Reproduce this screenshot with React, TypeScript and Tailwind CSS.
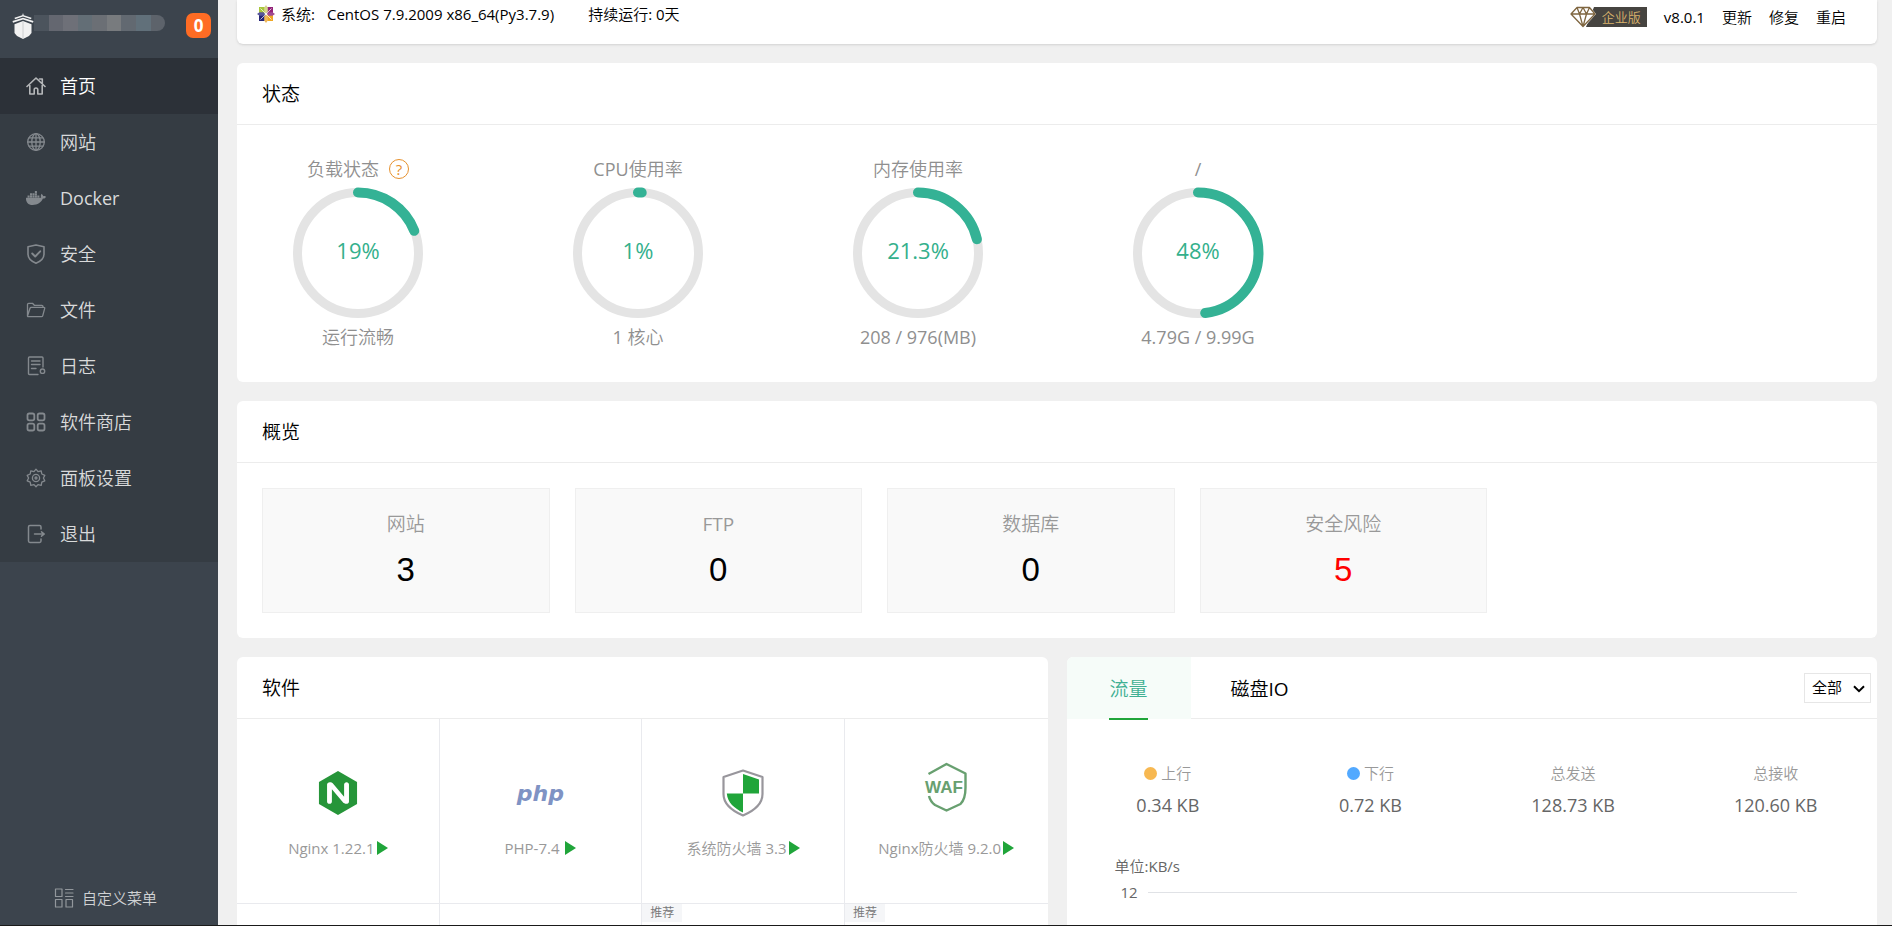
import React from 'react';
import { FaDocker } from 'react-icons/fa';
import { SiNginx } from 'react-icons/si';

const stroke = { fill: 'none', stroke: 'currentColor', strokeWidth: 1.6, strokeLinejoin: 'round', strokeLinecap: 'round' } as const;

const HomeIcon = () => (
  <svg viewBox="0 0 20 20" className="size-5" {...stroke}>
    <path d="M1 10.5 10 2l9 8.5M13.5 3h2.8v4.5M3.8 9.5V18h4.4v-4.2a1.8 1.8 0 0 1 3.6 0V18h4.4V9.5" />
  </svg>
);

const GlobeIcon = () => (
  <svg viewBox="0 0 20 20" className="size-5" {...stroke} strokeWidth={1.3}>
    <circle cx="10" cy="10" r="8.3" />
    <ellipse cx="10" cy="10" rx="4.2" ry="8.3" />
    <path d="M10 1.7v16.6M1.7 10h16.6M3 5.8h14M3 14.2h14" />
  </svg>
);

const ShieldIcon = () => (
  <svg viewBox="0 0 20 20" className="size-5" {...stroke}>
    <path d="M10 1 18 2.8V10c0 4.4-3.4 7.4-8 9.2C5.4 17.4 2 14.4 2 10V2.8z" />
    <path d="m6.2 9.5 3 3 5-5.2" strokeWidth={1.9} />
  </svg>
);

const FolderIcon = () => (
  <svg viewBox="0 0 20 20" className="size-5" {...stroke} strokeWidth={1.3}>
    <path d="M1.5 16V4.5c0-.8.4-1.2 1.2-1.2h3.8l1.8 2h7.5c.8 0 1.2.4 1.2 1.2v.8M1.5 16 4 8.2c.2-.6.5-.9 1.2-.9h12.6c.8 0 1.1.4.9 1.1l-2 7.4c-.2.7-.5.9-1.2.9H2.3c-.6 0-.8-.3-.8-.7z" />
  </svg>
);

const LogIcon = () => (
  <svg viewBox="0 0 20 20" className="size-5" {...stroke} strokeWidth={1.4}>
    <path d="M12 18.5H3.5c-.6 0-1-.4-1-1V2c0-.6.4-1 1-1H16c.6 0 1 .4 1 1v9M5.5 5H14M5.5 8.5H14M5.5 12.5H10" />
    <circle cx="16.5" cy="15.2" r="2.2" />
  </svg>
);

const StoreIcon = () => (
  <svg viewBox="0 0 20 20" className="size-5" {...stroke} strokeWidth={1.8}>
    <rect x="1.5" y="1.5" width="6.8" height="6.8" rx="1.8" />
    <rect x="11.7" y="1.5" width="6.8" height="6.8" rx="1.8" />
    <rect x="1.5" y="11.7" width="6.8" height="6.8" rx="1.8" />
    <rect x="11.7" y="11.7" width="6.8" height="6.8" rx="1.8" />
  </svg>
);

const GearIcon = () => (
  <svg viewBox="0 0 20 20" className="size-5" {...stroke} strokeWidth={1.3}>
    <path d="M10 1.2 12 3.6l3.2-.8.6 3.2 3 1.4L17.4 10l1.4 2.8-3 1.3-.6 3.2-3.2-.7L10 18.8l-2-2.2-3.2.7-.6-3.2-3-1.3L2.6 10 1.2 7.4l3-1.4.6-3.2 3.2.8z" />
    <circle cx="10" cy="10" r="3.6" />
    <circle cx="10" cy="10" r="1" />
  </svg>
);

const ExitIcon = () => (
  <svg viewBox="0 0 20 20" className="size-5" {...stroke} strokeWidth={1.5}>
    <path d="M15 5V3c0-.9-.5-1.4-1.4-1.4H3.9c-.9 0-1.4.5-1.4 1.4v14c0 .9.5 1.4 1.4 1.4h9.7c.9 0 1.4-.5 1.4-1.4v-2M8.5 10h9M15.5 7.8l2.8 2.2-2.8 2.2" />
  </svg>
);

const menu = [
  { label: '首页', icon: <HomeIcon />, active: true },
  { label: '网站', icon: <GlobeIcon /> },
  { label: 'Docker', icon: <FaDocker className="size-5" /> },
  { label: '安全', icon: <ShieldIcon /> },
  { label: '文件', icon: <FolderIcon /> },
  { label: '日志', icon: <LogIcon /> },
  { label: '软件商店', icon: <StoreIcon /> },
  { label: '面板设置', icon: <GearIcon /> },
  { label: '退出', icon: <ExitIcon /> },
];

const gauges = [
  { title: '负载状态', value: 19, foot: '运行流畅', help: true },
  { title: 'CPU使用率', value: 1, foot: '1 核心' },
  { title: '内存使用率', value: 21.3, foot: '208 / 976(MB)' },
  { title: '/', value: 48, foot: '4.79G / 9.99G' },
];

const overview = [
  { label: '网站', count: 3 },
  { label: 'FTP', count: 0 },
  { label: '数据库', count: 0 },
  { label: '安全风险', count: 5, danger: true },
];

const traffic = [
  { label: '上行', value: '0.34 KB', dot: 'bg-[#f7b851]' },
  { label: '下行', value: '0.72 KB', dot: 'bg-[#52a9ff]' },
  { label: '总发送', value: '128.73 KB' },
  { label: '总接收', value: '120.60 KB' },
];

const FirewallLogo = () => (
  <svg viewBox="0 0 42 48" className="h-12 w-[42px]">
    <path d="M21 1.5 40.5 8v17c0 10-9 17-19.5 21.5C10.5 42 1.5 35 1.5 25V8z" fill="#fff" stroke="#98969c" strokeWidth="2.2" strokeLinejoin="round" />
    <path d="M21 5 37 10.5V24.5H21zM21 24.5V43.5C12.5 39.5 5.5 33.5 4.8 24.5z" fill="#20a53a" />
  </svg>
);

const WafLogo = () => (
  <svg viewBox="0 0 44 50" className="h-[50px] w-11">
    <path d="M4.5 12 22.5 2 41.5 11.5v14c0 8-1.5 13-5 16.5L22.5 48.5 11 43c-3.5-2.5-5-5-6-9" fill="none" stroke="#68a070" strokeWidth="2.4" strokeLinejoin="round" />
    <text x="20" y="31" textAnchor="middle" fontFamily="Liberation Sans, sans-serif" fontWeight="700" fontSize="17" fill="#68a070">WAF</text>
  </svg>
);

const software = [
  { name: 'Nginx 1.22.1', logo: <SiNginx className="size-11 text-[#269539]" /> },
  { name: 'PHP-7.4 ', logo: <span className="pt-0.5 font-['DejaVu_Sans'] text-[22px] leading-7 font-bold text-[#7f93c4] italic">php</span> },
  { name: '系统防火墙 3.3', logo: <FirewallLogo /> },
  { name: 'Nginx防火墙 9.2.0', logo: <WafLogo />, raised: true },
];

const PanelLogo = () => (
  <svg viewBox="0 0 22 26" className="h-[26px] w-[22px]" fill="#f2f2f2">
    <path d="M11 0 11.7 2.2 19.5 4.8 19 6.2 11 3.5 3 6.2 2.5 4.8 10.3 2.2z" />
    <path d="M11 4.7 21.5 8 21 9.8 11 6.4 1 9.8.5 8z" />
    <path d="M11 8 19.5 11.2V20L17 23 11 26 5 23 2.5 20V11.2z" />
    <path d="M11 8V26" stroke="#c4c6c8" strokeWidth=".8" />
  </svg>
);

const CentosLogo = () => (
  <svg viewBox="0 0 18 18" className="size-[18px]">
    <path d="M2 2h6.5v6.5H2z" fill="#a8c63b" />
    <path d="M9.5 2H16v6.5H9.5z" fill="#932279" />
    <path d="M2 9.5h6.5V16H2z" fill="#262577" />
    <path d="M9.5 9.5H16V16H9.5z" fill="#efa724" />
    <path d="m9 0 1.8 2.5v4L9 8 7.2 6.5v-4z" fill="#d6d58b" />
    <path d="m18 9-2.5 1.8h-4L10 9l1.5-1.8h4z" fill="#a04a92" />
    <path d="m9 18-1.8-2.5v-4L9 10l1.8 1.5v4z" fill="#efb85a" />
    <path d="m0 9 2.5-1.8h4L8 9l-1.5 1.8h-4z" fill="#57559a" />
    <path d="m3.5 3.5 11 11M14.5 3.5l-11 11" stroke="#fff" strokeWidth=".7" />
  </svg>
);

const EditionBadge = () => (
  <div className="flex items-center">
    <svg viewBox="0 0 28 22" className="h-[22px] w-7">
      <path d="M24 1h4v20H16z" fill="#464440" />
      <path d="M6.5 1h14l5.5 7-12.5 14L1 8z" fill="#fff" />
      <path d="M7 1.5h12.5L25 8 13 20.5 1 8zM1 8h24M7 1.5 9.5 8 13 20.5 16.5 8l3-6.5M9.5 8 13 1.5 16.5 8" fill="none" stroke="#7f6640" strokeWidth="1.3" strokeLinejoin="round" />
    </svg>
    <span className="h-5 bg-[#464440] pr-1.5 pl-1 text-[13px] leading-5 text-[#d9b36c]">企业版</span>
  </div>
);

const Gauge = ({ title, value, foot, help }: { title: string; value: number; foot: string; help?: boolean }) => {
  const length = 2 * Math.PI * 60.5;
  return (
    <li className="flex w-35 flex-col items-center text-lg leading-7 whitespace-nowrap text-[#8f8f8f]">
      <h3 className="flex items-center gap-2.5">
        {title}
        {help && (
          <button type="button" aria-label="负载说明" className="flex size-5 items-center justify-center rounded-full border border-[#e6912e] text-[15px] leading-none text-[#e6912e]">
            ?
          </button>
        )}
      </h3>
      <div className="my-1 grid place-items-center">
        <svg viewBox="0 0 132 132" className="col-start-1 row-start-1 size-[132px] -rotate-90">
          <circle cx="66" cy="66" r="60.5" fill="none" stroke="#e4e4e4" strokeWidth="9" />
          <circle cx="66" cy="66" r="60.5" fill="none" stroke="#34b295" strokeWidth="10" strokeLinecap="round" strokeDasharray={`${(length * value) / 100} ${length}`} />
        </svg>
        <span className="col-start-1 row-start-1 pb-1.5 text-[22px] text-[#34b08c]">{value}%</span>
      </div>
      <p>{foot}</p>
    </li>
  );
};

const CardTitle = ({ children }: { children: React.ReactNode }) => (
  <h2 className="flex h-[62px] shrink-0 items-center border-b border-[#ececec] px-[25px] pt-0.5 text-[19px] text-black">{children}</h2>
);

export default function App() {
  return (
    <div className="flex h-screen overflow-hidden border-b border-[#1a1a1a] bg-[#f0f0f0] font-['Open_Sans','Noto_Sans_CJK_SC_DemiLight','Noto_Sans_CJK_SC',sans-serif] text-[15px]">
      <aside className="flex w-[218px] shrink-0 flex-col bg-[#3c444d]">
        <div className="flex h-[58px] items-start pt-[13px] pr-[7px] pl-3">
          <PanelLogo />
          {/* masked host address */}
          <div className="mt-0.5 mr-auto flex h-4 w-[131px] overflow-hidden rounded-r-full rounded-l-lg">
            <span className="flex-1 bg-[#4c545d]" />
            <span className="flex-1 bg-[#646770]" />
            <span className="flex-1 bg-[#6e7078]" />
            <span className="flex-1 bg-[#636e76]" />
            <span className="flex-1 bg-[#6b6f75]" />
            <span className="flex-1 bg-[#787b7e]" />
            <span className="flex-1 bg-[#626971]" />
            <span className="flex-1 bg-[#61707a]" />
            <span className="flex-1 bg-[#5d636b]" />
          </div>
          <span className="flex size-[25px] items-center justify-center rounded-[7px] bg-[#ff6c24] text-[17px] font-bold text-white">0</span>
        </div>
        <nav className="bg-[#353c43]">
          {menu.map((m) => (
            <a key={m.label} href="#" className={m.active ? 'flex h-14 items-center gap-3.5 bg-[#2c3138] pl-[26px] text-lg text-white' : 'flex h-14 items-center gap-3.5 pl-[26px] text-lg text-[#d9dadb]'}>
              <span className={m.active ? 'text-[#b5b7b9]' : 'text-[#84898e]'}>{m.icon}</span>
              {m.label}
            </a>
          ))}
        </nav>
        <button type="button" className="mt-auto mb-[11px] flex h-8 items-center gap-2 pl-[54px] text-[#d0d2d4]">
          <svg viewBox="0 0 20 20" className="size-5 text-[#92979c]" {...stroke} strokeWidth={1.2}>
            <path d="M1.5 1h6.5v7.5H1.5zM1.5 11.5h6.5V19H1.5zM12 11.5h6.5V19H12zM11.5 1.5h7.5M11.5 5h7.5M11.5 8.5h7.5" />
          </svg>
          自定义菜单
        </button>
      </aside>

      <main className="flex min-w-0 flex-1 flex-col gap-[19px] pr-[15px] pl-[19px]">
        <header className="flex h-11 shrink-0 items-start justify-between rounded-b-md bg-white pr-[31px] pl-5 text-black shadow-sm">
          <div className="flex h-7 items-center">
            <CentosLogo />
            <span className="ml-1.5">系统:</span>
            <span className="ml-3">CentOS 7.9.2009 x86_64(Py3.7.9)</span>
            <span className="ml-[34px]">持续运行: 0天</span>
          </div>
          <div className="flex h-[34px] items-center gap-[17px]">
            <EditionBadge />
            <span>v8.0.1</span>
            <a href="#">更新</a>
            <a href="#">修复</a>
            <a href="#">重启</a>
          </div>
        </header>

        <section className="shrink-0 rounded-md bg-white">
          <CardTitle>状态</CardTitle>
          <ul className="flex gap-35 px-[51px] pt-[30px] pb-[31px]">
            {gauges.map((g) => (
              <Gauge key={g.title} {...g} />
            ))}
          </ul>
        </section>

        <section className="shrink-0 rounded-md bg-white">
          <CardTitle>概览</CardTitle>
          <ul className="grid max-w-[1275px] grid-cols-4 gap-[25px] p-[25px]">
            {overview.map((o) => (
              <li key={o.label} className="flex h-[125px] flex-col items-center border border-[#efefef] bg-[#f9f9f9] pt-[21px]">
                <span className="text-[19px] leading-7 text-[#999]">{o.label}</span>
                <a href="#" className={o.danger ? "mt-3 font-['Liberation_Sans'] text-[33px] leading-10 text-[#f00]" : "mt-3 font-['Liberation_Sans'] text-[33px] leading-10 text-black"}>
                  {o.count}
                </a>
              </li>
            ))}
          </ul>
        </section>

        <div className="grid min-h-0 flex-1 grid-cols-2 gap-[19px]">
          <section className="flex min-h-0 flex-col overflow-hidden rounded-t-md bg-white">
            <CardTitle>软件</CardTitle>
            <ul className="grid flex-1 grid-cols-4 grid-rows-[185px_185px]">
              {software.map((s) => (
                <li key={s.name} className="flex flex-col items-center border-r border-b border-[#e9eaee] text-[#999] nth-[4]:border-r-0">
                  <div className={s.raised ? 'mt-[43px] flex h-[50px] items-center' : 'mt-[49px] flex h-[50px] items-center'}>{s.logo}</div>
                  <div className={s.raised ? 'mt-6 flex h-6 items-center gap-0.5 whitespace-pre' : 'mt-[18px] flex h-6 items-center gap-0.5 whitespace-pre'}>
                    {s.name}
                    <svg viewBox="0 0 11 14" className="h-3.5 w-[11px]">
                      <path d="M0 0 11 7 0 14z" fill="#20a53a" />
                    </svg>
                  </div>
                </li>
              ))}
              <li className="border-r border-[#e9eaee]" />
              <li className="border-r border-[#e9eaee]" />
              <li className="border-r border-[#e9eaee]">
                <span className="inline-block bg-[#f5f6f8] px-2 align-top text-xs leading-[18px] text-[#777]">推荐</span>
              </li>
              <li>
                <span className="inline-block bg-[#f5f6f8] px-2 align-top text-xs leading-[18px] text-[#777]">推荐</span>
              </li>
            </ul>
          </section>

          <section className="flex min-h-0 flex-col overflow-hidden rounded-t-md bg-white">
            <div className="flex h-[62px] shrink-0 items-center border-b border-[#ececec] pr-1.5 text-[19px]">
              <button type="button" className="flex h-[62px] min-w-[124px] justify-center bg-[#f6fcf9] text-[#3fb093]">
                <span className="flex h-[63px] items-center border-b-2 border-[#20a53a] pt-1">流量</span>
              </button>
              <button type="button" className="h-[61px] px-10 pt-1 text-black">磁盘IO</button>
              <div className="relative ml-auto flex">
                <select aria-label="网卡" defaultValue="全部" className="h-[30px] w-[67px] appearance-none border border-[#e6e6e6] bg-white pl-[7px] text-[15px] text-black">
                  <option>全部</option>
                </select>
                <svg viewBox="0 0 12 8" className="pointer-events-none absolute top-3 right-1.5 h-2 w-3" fill="none" stroke="#000" strokeWidth="2">
                  <path d="m1 1.2 5 5 5-5" />
                </svg>
              </div>
            </div>
            <ul className="grid grid-cols-4 pt-[42px] text-center">
              {traffic.map((t) => (
                <li key={t.label}>
                  <p className="flex h-6 items-center justify-center gap-1 text-[#999]">
                    {t.dot && <span className={`size-[13px] rounded-full ${t.dot}`} />}
                    {t.label}
                  </p>
                  <p className="mt-1.5 text-lg leading-7 text-[#666]">{t.value}</p>
                </li>
              ))}
            </ul>
            <div className="pt-[35px] pr-20 pl-12 text-[#666]">
              <p className="leading-6">单位:KB/s</p>
              <div className="mt-0.5 flex h-6 items-center gap-2.5 pl-1.5">
                <span>12</span>
                <span className="h-px flex-1 bg-[#e0e2e6]" />
              </div>
            </div>
          </section>
        </div>
      </main>
    </div>
  );
}
